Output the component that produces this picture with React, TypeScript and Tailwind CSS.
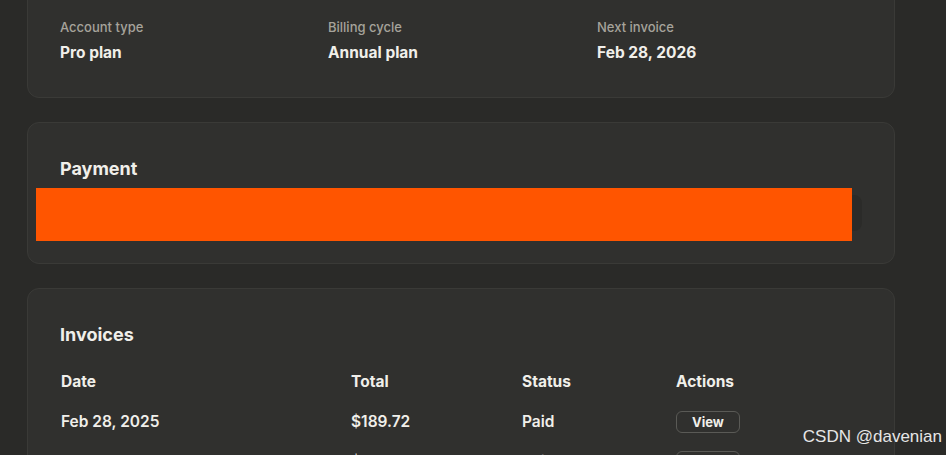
import React from "react";

const font = { fontFamily: "Inter, 'Liberation Sans', sans-serif" };

function Card({ children }: { children: React.ReactNode }) {
  return (
    <section className="relative rounded-xl border border-[#3a3a37] bg-[#30302e] px-8 py-8">
      {children}
    </section>
  );
}

function Plan() {
  const items = [
    { label: "Account type", value: "Pro plan" },
    { label: "Billing cycle", value: "Annual plan" },
    { label: "Next invoice", value: "Feb 28, 2026" },
  ];
  return (
    <Card>
      <div className="grid grid-cols-[268px_269px_1fr]">
        {items.map((item) => (
          <div key={item.label} className="flex flex-col gap-1">
            <span className="text-[13px] leading-5 font-medium text-[#a6a39b]">
              {item.label}
            </span>
            <span className="text-[15.5px] leading-6 font-bold text-[#f0efea]">
              {item.value}
            </span>
          </div>
        ))}
      </div>
    </Card>
  );
}

function Payment() {
  return (
    <Card>
      <h2 className="text-lg leading-7 font-bold text-[#f0efea]">Payment</h2>
      <div className="mt-3 h-9 rounded-lg bg-[#2b2b29]" />
      {/* redaction box laid over the card details */}
      <div className="absolute left-2 top-[65px] h-[53px] w-[816px] bg-[#ff5500]" />
    </Card>
  );
}

function Invoices() {
  const rows = [
    { date: "Feb 28, 2025", total: "$189.72", status: "Paid" },
    { date: "Feb 28, 2024", total: "$189.72", status: "Paid" },
  ];
  const cols = "grid grid-cols-[290px_171px_154px_1fr] items-center pl-px";
  return (
    <Card>
      <h2 className="text-lg leading-7 font-bold text-[#f0efea]">Invoices</h2>
      <div className="mt-[13px] text-[15.5px] text-[#f0efea]">
        <div className={`${cols} h-10 font-bold`}>
          <span>Date</span>
          <span>Total</span>
          <span>Status</span>
          <span>Actions</span>
        </div>
        {rows.map((row, i) => (
          <div key={i} className={`${cols} h-10 font-semibold`}>
            <span>{row.date}</span>
            <span>{row.total}</span>
            <span>{row.status}</span>
            <div className="flex">
              <button className="h-[22px] w-16 rounded-md border border-[#5a5a56] text-[13px] leading-none font-bold text-[#f0efea]">
                View
              </button>
            </div>
          </div>
        ))}
      </div>
    </Card>
  );
}

export default function App() {
  return (
    <main
      className="relative h-[455px] w-full overflow-hidden bg-[#2a2a28]"
      style={font}
    >
      <div className="ml-[27px] mt-[-16px] flex w-[868px] flex-col gap-6">
        <Plan />
        <Payment />
        <Invoices />
      </div>
      <span
        className="absolute right-1 bottom-[6px] text-[17px] text-[#e6e6e6]"
        style={{ fontFamily: "'Liberation Sans', Arial, sans-serif" }}
      >
        CSDN @davenian
      </span>
    </main>
  );
}
